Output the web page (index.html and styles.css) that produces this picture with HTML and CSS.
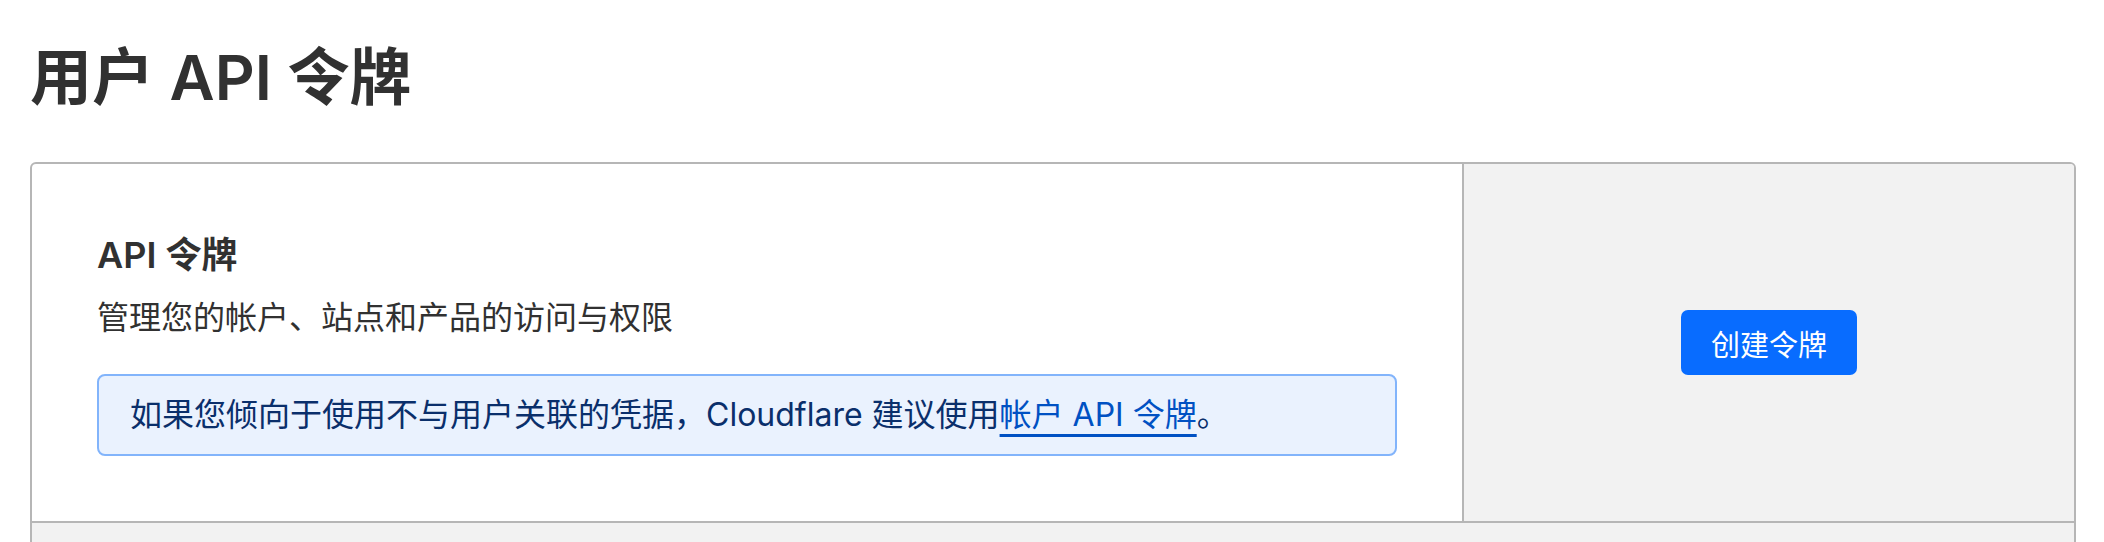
FILE: index.html
```html
<!DOCTYPE html>
<html lang="zh-CN">
<head>
    <meta charset="UTF-8">
    <meta name="viewport" content="width=device-width, initial-scale=1.0">
    <title>用户 API 令牌</title>
    <link rel="stylesheet" href="styles.css">
</head>
<body>
    <div class="page">
        <h1 class="page-title">用户 API 令牌</h1>
        <div class="card">
            <div class="card-row">
                <div class="card-main">
                    <h2 class="card-title">API 令牌</h2>
                    <p class="card-desc">管理您的帐户、站点和产品的访问与权限</p>
                    <div class="notice">
                        如果您倾向于使用不与用户关联的凭据，Cloudflare 建议使用<a href="#" class="notice-link">帐户 API 令牌</a>。
                    </div>
                </div>
                <div class="card-side">
                    <button class="btn-primary">创建令牌</button>
                </div>
            </div>
            <div class="card-row card-row-empty"></div>
        </div>
    </div>
</body>
</html>
```

FILE: styles.css
```css
body {
    margin: 0;
    font-family: Inter, "Noto Sans CJK SC", sans-serif;
    color: #313131;
    background-color: white;
}
.page {
    padding: 42px 28px 0 30px;
}
.page-title {
    font-size: 62px;
    font-weight: 600;
    line-height: 72px;
    margin: 0 0 48px;
    color: #313131;
}
.card {
    border: 2px solid #b6b6b6;
    border-radius: 6px;
    overflow: hidden;
}
.card-row {
    display: flex;
    border-bottom: 2px solid #b6b6b6;
}
.card-main {
    flex: 1;
    padding: 68px 65px 65px 65px;
}
.card-title {
    font-size: 36px;
    font-weight: 600;
    line-height: 46px;
    margin: 0 0 14px;
}
.card-desc {
    font-size: 32px;
    line-height: 51px;
    margin: 0 0 31px;
}
.notice {
    font-size: 32px;
    line-height: 51px;
    color: #0a2f6b;
    background-color: #eaf2fe;
    border: 2px solid #82b4fb;
    border-radius: 8px;
    padding: 13px 31px 14px;
}
.notice-link {
    color: #0051c3;
    text-decoration: underline;
    text-decoration-thickness: 3px;
    text-underline-offset: 8px;
}
.card-side {
    width: 610px;
    border-left: 2px solid #b6b6b6;
    background-color: #f2f2f2;
    display: flex;
    align-items: center;
    justify-content: center;
}
.btn-primary {
    font-family: inherit;
    font-size: 29px;
    height: 65px;
    padding: 0 30px;
    color: white;
    background-color: #086cff;
    border: none;
    border-radius: 7px;
}
.card-row-empty {
    height: 60px;
    background-color: #f2f2f2;
    border-bottom: none;
}
```
